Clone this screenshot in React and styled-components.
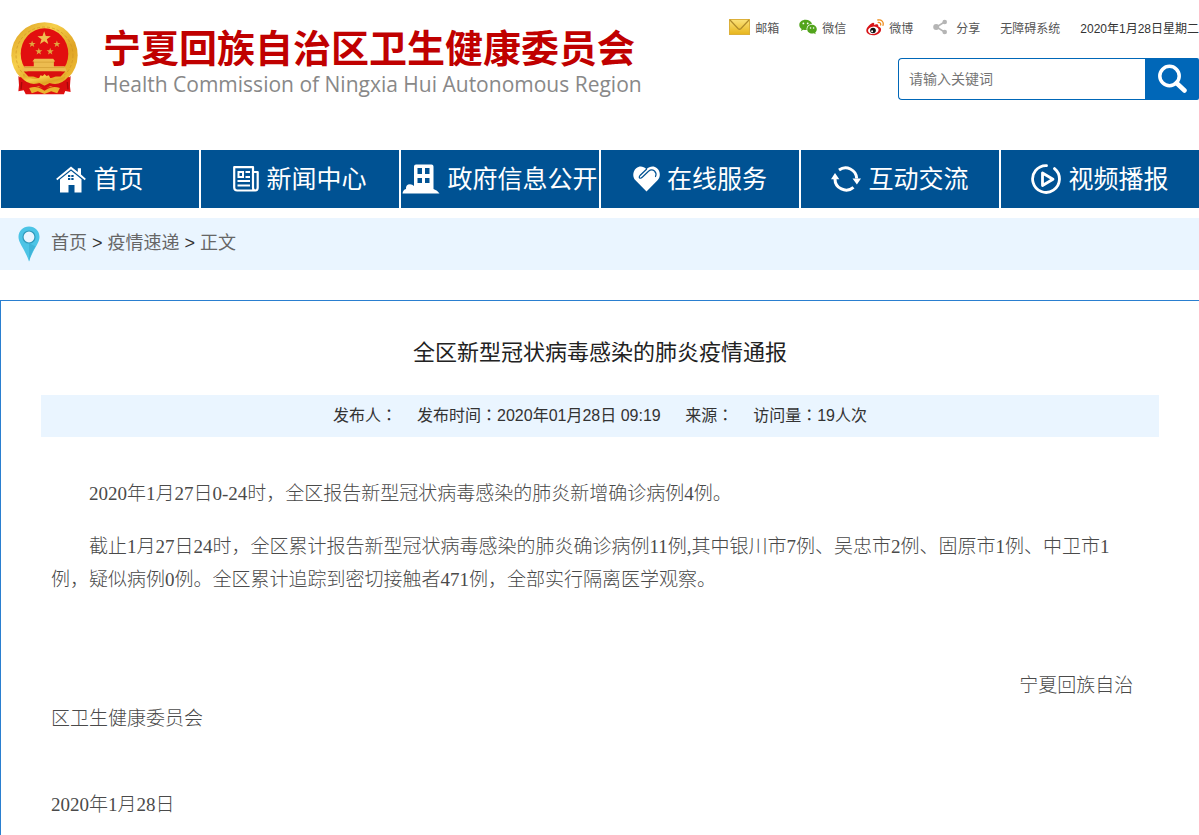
import React from 'react';
import styled, { createGlobalStyle } from 'styled-components';

const GlobalStyle = createGlobalStyle`
    * {
        box-sizing: border-box;
    }
    body {
        margin: 0;
        background: #fff;
        color: #333;
        font-family: 'Liberation Sans', 'Noto Sans CJK SC', sans-serif;
        font-size: 16px;
    }
    h1, h2, p {
        margin: 0;
        font-weight: normal;
    }
    a {
        color: inherit;
        text-decoration: none;
    }
    svg {
        display: block;
        flex: none;
    }
`;

const Header = styled.header`
    display: flex;
    justify-content: space-between;
    min-height: 150px;
`;

const Brand = styled.a`
    display: flex;
    align-items: flex-start;
    gap: 25px;
    padding: 22px 0 0 11px;
`;

const BrandText = styled.div`
    display: flex;
    flex-direction: column;
    gap: 4px;
    padding-top: 4px;
    white-space: nowrap;
`;

const SiteName = styled.h1`
    && {
        font-weight: bold;
    }
    font-family: 'Noto Sans CJK SC', sans-serif;
    font-size: 38px;
    line-height: 40px;
    color: #c00000;
`;

const SiteNameEn = styled.p`
    font-family: 'Open Sans', sans-serif;
    font-size: 21px;
    line-height: 28px;
    color: #888;
`;

const HeaderSide = styled.div`
    display: flex;
    flex-direction: column;
    align-items: flex-end;
    gap: 18px;
    padding-top: 14px;
`;

const TopBar = styled.div`
    display: flex;
    align-items: center;
    gap: 20px;
    height: 26px;
    font-size: 12px;
    white-space: nowrap;
`;

const TopLink = styled.a`
    display: flex;
    align-items: center;
    gap: 5px;
    color: #555;
`;

const SearchForm = styled.form`
    display: flex;
    width: 301px;
    height: 42px;
`;

const SearchInput = styled.input`
    flex: 1;
    min-width: 0;
    padding: 0 10px;
    border: 1px solid #0067b8;
    border-right: 0;
    border-radius: 4px 0 0 4px;
    font-family: inherit;
    font-size: 14px;
    outline: none;
    &::placeholder {
        color: #757575;
        opacity: 1;
    }
`;

const SearchButton = styled.button`
    display: flex;
    align-items: center;
    justify-content: center;
    width: 54px;
    padding: 0;
    border: 0;
    border-radius: 0 2px 2px 0;
    background: #0067b8;
    cursor: pointer;
`;

const Nav = styled.nav`
    display: grid;
    grid-template-columns: repeat(6, 1fr);
    gap: 2px;
    padding-left: 1px;
`;

const NavLink = styled.a`
    display: flex;
    align-items: center;
    justify-content: center;
    gap: 7px;
    height: 58px;
    background: #005293;
    color: #fff;
    font-size: 25px;
    white-space: nowrap;
    &:hover {
        background: #0067b8;
    }
`;

const NavLabel = styled.span`
    padding-bottom: 4px;
`;

const Crumbs = styled.nav`
    display: flex;
    align-items: center;
    gap: 11px;
    height: 52px;
    margin-top: 10px;
    padding-left: 18px;
    background: #eaf5ff;
    font-size: 18px;
    line-height: 50px;
    a, span {
        color: #666;
    }
`;

const CrumbText = styled.div`
    align-self: flex-start;
`;

const Article = styled.main`
    margin-top: 30px;
    padding: 36px 40px 14px;
    border: solid #2a7fd0;
    border-width: 1px 0 0 1px;
`;

const Title = styled.h2`
    font-size: 22px;
    line-height: 32px;
    text-align: center;
    color: #222;
`;

const Meta = styled.div`
    display: flex;
    justify-content: center;
    gap: 20px;
    margin-top: 26px;
    background: #eaf5ff;
    line-height: 42px;
`;

// the TC face centres the full-width colon in its box
const Colon = styled.span`
    font-family: 'Noto Sans CJK TC', sans-serif;
    line-height: 1;
`;

const Content = styled.div`
    display: flex;
    flex-direction: column;
    gap: 20px;
    padding: 40px 20px 0 10px;
    font-family: 'Liberation Serif', 'Noto Sans CJK SC', serif;
    font-size: 19px;
    line-height: 33px;
    color: #4a4a4a;
    p {
        font-weight: 300;
    }
`;

const Paragraph = styled.p`
    text-indent: 2em;
`;

const Signature = styled.p`
    margin-top: 53px;
    text-indent: 89%;
`;

const IssueDate = styled.p`
    margin-top: 33px;
`;

const star = (cx, cy, r) =>
    Array.from({ length: 10 }, (_, i) => {
        const a = (Math.PI / 5) * i - Math.PI / 2;
        const d = i % 2 ? r * 0.4 : r;
        return `${(cx + d * Math.cos(a)).toFixed(1)},${(cy + d * Math.sin(a)).toFixed(1)}`;
    }).join(' ');

const Emblem = () => (
    <svg width="67" height="73" viewBox="0 0 200 216" aria-hidden="true">
        <defs>
            <linearGradient id="gold" x1="0" y1="0" x2="1" y2="1">
                <stop offset="0" stopColor="#d99a1c" />
                <stop offset="0.35" stopColor="#f6cf4a" />
                <stop offset="0.65" stopColor="#e0a424" />
                <stop offset="1" stopColor="#f3c63c" />
            </linearGradient>
        </defs>
        <path d="M27 156 L22 206 L38 203 L44 215 L158 215 L162 205 L178 208 L172 156 Z" fill="#e01010" />
        <ellipse cx="100" cy="98" rx="99" ry="98" fill="url(#gold)" />
        <path d="M22 160 Q50 192 100 196 Q150 192 178 160 L176 190 L152 208 L48 208 L24 190 Z" fill="#d80f0f" />
        <ellipse cx="100" cy="98" rx="85" ry="84" fill="none" stroke="#cf9324" strokeWidth="2" strokeDasharray="9 6" />
        <ellipse cx="100" cy="94" rx="71" ry="76" fill="#e20f0f" />
        <polygon points={star(99, 48, 21)} fill="#f0c050" />
        <polygon points={star(63, 65, 11)} fill="#e0a840" />
        <polygon points={star(137, 65, 11)} fill="#e0a840" />
        <polygon points={star(83, 87, 11)} fill="#e0a840" />
        <polygon points={star(117, 87, 11)} fill="#e0a840" />
        <path d="M70 109 H126 L132 117 H128 V131 H160 L167 147 H33 L40 131 H68 V117 H64 Z" fill="#ecbc50" />
        <path d="M68 119 H128 M40 135 H160" stroke="#cf9a30" strokeWidth="2" />
        <path d="M38 147 H162 L148 162 H52 Z" fill="#d90f0f" />
        <path d="M36 156 Q68 176 84 166 L88 158 L95 160 L100 154 L106 160 L113 158 L117 166 Q134 176 164 156 L158 176 L132 184 L118 180 L100 188 L82 180 L66 184 L40 176 Z" fill="url(#gold)" />
        <path d="M26 166 Q52 196 84 186 L100 194 L116 186 Q148 196 174 166" fill="none" stroke="#d80f0f" strokeWidth="9" />
        <path d="M54 196 Q76 190 90 198 L100 204 L110 198 Q126 190 146 196 L138 212 L120 206 L100 214 L80 206 L62 212 Z" fill="#eab22f" />
        <path d="M32 178 L30 200 M168 178 L170 200" stroke="#a80909" strokeWidth="4" />
    </svg>
);

const MailIcon = () => (
    <svg width="21" height="16" viewBox="0 0 21 16" aria-hidden="true">
        <defs>
            <linearGradient id="mail" x1="0" y1="0" x2="0" y2="1">
                <stop offset="0" stopColor="#fbe27a" />
                <stop offset="1" stopColor="#e7b51c" />
            </linearGradient>
        </defs>
        <rect x="0.5" y="0.5" width="20" height="15" fill="url(#mail)" stroke="#dcb03a" />
        <path d="M1 1 L9 9.500 Q10.500 11 12 9.500 L20 1" fill="none" stroke="#b08c2c" strokeWidth="1.200" />
    </svg>
);

const WechatIcon = () => (
    <svg width="18" height="16" viewBox="0 0 18 16" aria-hidden="true">
        <path d="M6.600 0.800 C3 0.800 0.300 3 0.300 5.900 C0.300 7.500 1.200 8.900 2.600 9.900 L2 12 L4.300 10.700 C5.500 11 6.500 11.100 7.700 10.900 C7 7.800 9.500 5 13 5 C12.500 2.600 9.900 0.800 6.600 0.800 Z" fill="#52a41c" />
        <path d="M17.800 10.200 C17.800 7.700 15.600 5.800 12.900 5.800 C10.200 5.800 8.200 7.800 8.200 10.200 C8.200 12.600 10.300 14.500 13 14.500 C13.700 14.500 14.300 14.400 14.900 14.200 L16.700 15.200 L16.200 13.500 C17.200 12.700 17.800 11.500 17.800 10.200 Z" fill="#52a41c" />
        <g fill="#fff">
            <circle cx="4.400" cy="4.400" r="0.900" />
            <circle cx="8.700" cy="4.400" r="0.900" />
            <circle cx="11.500" cy="9" r="0.800" />
            <circle cx="14.600" cy="9" r="0.800" />
        </g>
    </svg>
);

const WeiboIcon = () => (
    <svg width="18" height="17" viewBox="0 0 18 17" aria-hidden="true">
        <path d="M6.500 4 C7.900 3.500 8.600 4.300 8.100 5.900 C10.500 4.900 12.700 5.100 12.300 7.400 C14.500 8 15.600 9.600 14.900 11.700 C14 14.500 10.600 16.300 7 16.200 C3.200 16.100 0.300 14.300 0.300 11.500 C0.300 8.900 3.600 5 6.500 4 Z" fill="#d81418" />
        <ellipse cx="7.300" cy="11.300" rx="5.300" ry="3.700" fill="#fff" transform="rotate(-8 7.300 11.300)" />
        <circle cx="7" cy="11.500" r="2.800" fill="#111" />
        <circle cx="6.100" cy="12.200" r="1" fill="#fff" />
        <path d="M11.800 1 C15.500 0.300 18 3 17 6.400 M12.200 3.500 C14.100 3.200 15 4.500 14.600 6" fill="none" stroke="#ee8d1c" strokeWidth="1.300" strokeLinecap="round" />
    </svg>
);

const ShareIcon = () => (
    <svg width="18" height="16" viewBox="0 0 18 16" aria-hidden="true">
        <path d="M11.500 3 L3.500 8 L11.500 13" fill="none" stroke="#b5b5b5" strokeWidth="1.500" />
        <g fill="#b5b5b5">
            <circle cx="3.200" cy="8" r="3" />
            <circle cx="11.700" cy="3" r="2.300" />
            <circle cx="11.700" cy="13" r="2.300" />
        </g>
    </svg>
);

const SearchIcon = () => (
    <svg width="30" height="30" viewBox="0 0 30 30" fill="none" stroke="#fff" aria-hidden="true">
        <circle cx="12.500" cy="12" r="9.700" strokeWidth="3.500" />
        <path d="M19.500 19 L27.500 26.500" strokeWidth="4.500" strokeLinecap="round" />
    </svg>
);

const HomeIcon = () => (
    <svg width="30" height="27" viewBox="0 0 30 27" fill="#fff" aria-hidden="true">
        <path d="M15 0.500 L21.800 6 V2.200 H25 V8.600 L29.800 12.800 L28.800 14.200 L15 3.200 L1.200 14.200 L0.200 12.800 Z" />
        <path d="M15 4.800 L25.500 13.200 V26.500 H18.500 V19 H12.500 V26.500 H4 V13.600 Z" />
        <path d="M12 9 H14.300 V11 H12 Z M15.300 9 H17.600 V11 H15.300 Z M12 12 H14.300 V14 H12 Z M15.300 12 H17.600 V14 H15.300 Z" fill="#005293" />
    </svg>
);

const NewsIcon = () => (
    <svg width="26" height="26" viewBox="0 0 26 26" fill="none" stroke="#fff" aria-hidden="true">
        <path d="M1.200 1.200 H20 V21.500 Q20 24.500 22.300 24.500 H4.200 Q1.200 24.500 1.200 21.500 Z M20 6 H24.700 V21.500 Q24.700 24.500 22.300 24.500" strokeWidth="2.200" strokeLinejoin="round" />
        <rect x="5.500" y="6" width="4.500" height="5" strokeWidth="2" />
        <path d="M12.500 6 H17 M12.500 11 H17 M4.500 15 H17 M4.500 19.500 H17" strokeWidth="2" />
    </svg>
);

const BuildingIcon = () => (
    <svg width="38" height="30" viewBox="0 0 38 30" aria-hidden="true">
        <path d="M12 28 V2.500 Q12 0.500 14 0.500 H29.500 Q31.500 0.500 31.500 2.500 V25 Q35.500 26 37.500 29.500 H0.500 Q1 25.500 4 25 Q3.600 20.500 8 20.300 Q10.500 20.300 12 22 Z" fill="#fff" />
        <path d="M15.500 4 H20 V10 H15.500 Z M23 4 H27.500 V10 H23 Z M15.500 14 H20 V19 H15.500 Z M23 14 H27.500 V19 H23 Z" fill="#005293" />
    </svg>
);

const HeartIcon = () => (
    <svg width="27" height="26" viewBox="0 0 27 26" aria-hidden="true">
        <path d="M13.500 25.500 L2.200 14 C-0.800 10.500 -0.200 5 3.200 2.200 C6.500 -0.300 10.500 0.200 13.500 3.200 C16.500 0.200 21 -0.300 24 2.200 C27.400 5 27.800 10.500 24.800 14 Z" fill="#fff" />
        <path d="M13.500 3.200 L7 9.500 Q5.500 11.500 7 12.200 Q8 12.500 9.500 11 L15.500 5.300 Q18.500 2.800 21.500 5 Q24 7.500 22.500 10.500" fill="none" stroke="#005293" strokeWidth="1.200" strokeLinecap="round" />
    </svg>
);

const CycleIcon = () => (
    <svg width="30" height="26" viewBox="0 0 30 26" aria-hidden="true">
        <path d="M8 4 A11.200 11.200 0 0 1 25.700 12.500 M22.500 21.300 A11.200 11.200 0 0 1 4 12.500" fill="none" stroke="#fff" strokeWidth="3" />
        <path d="M21.500 12.500 H30 L25.900 18.500 Z M0 13.200 H8.300 L4 7 Z" fill="#fff" />
    </svg>
);

const PlayIcon = () => (
    <svg width="30" height="30" viewBox="0 0 30 30" fill="none" stroke="#fff" strokeLinecap="round" strokeLinejoin="round" aria-hidden="true">
        <path d="M15.500 1.600 A13.400 13.400 0 1 0 23.500 4.600" strokeWidth="2.800" />
        <path d="M11.500 9 V21.500 L22 15.200 Z" strokeWidth="2.800" />
    </svg>
);

const PinIcon = () => (
    <svg width="22" height="36" viewBox="0 0 22 36" aria-hidden="true">
        <path d="M11 0.500 C5 0.500 0.500 5 0.500 11 C0.500 17.500 7 23 11 35.500 C15 23 21.500 17.500 21.500 11 C21.500 5 17 0.500 11 0.500 Z" fill="#4cc4e6" />
        <path d="M11 17 L17.500 20.500 C15 24 12.500 29 11 35.500 Z" fill="#3fb4d8" />
        <circle cx="11" cy="11" r="6" fill="#eaf5ff" stroke="#3099bb" strokeWidth="1.200" />
    </svg>
);

const topLinks = [
    { label: '邮箱', Icon: MailIcon },
    { label: '微信', Icon: WechatIcon },
    { label: '微博', Icon: WeiboIcon },
    { label: '分享', Icon: ShareIcon },
];

const navItems = [
    { label: '首页', Icon: HomeIcon },
    { label: '新闻中心', Icon: NewsIcon },
    { label: '政府信息公开', Icon: BuildingIcon },
    { label: '在线服务', Icon: HeartIcon },
    { label: '互动交流', Icon: CycleIcon },
    { label: '视频播报', Icon: PlayIcon },
];

const App = () => (
    <>
        <GlobalStyle />
        <Header>
            <Brand href="#">
                <Emblem />
                <BrandText>
                    <SiteName>宁夏回族自治区卫生健康委员会</SiteName>
                    <SiteNameEn>Health Commission of Ningxia Hui Autonomous Region</SiteNameEn>
                </BrandText>
            </Brand>
            <HeaderSide>
                <TopBar>
                    {topLinks.map(({ label, Icon }) => (
                        <TopLink href="#" key={label}><Icon />{label}</TopLink>
                    ))}
                    <TopLink href="#">无障碍系统</TopLink>
                    <span>2020年1月28日星期二</span>
                </TopBar>
                <SearchForm onSubmit={(e) => e.preventDefault()}>
                    <SearchInput type="text" aria-label="请输入关键词" placeholder="请输入关键词" />
                    <SearchButton type="submit" aria-label="搜索"><SearchIcon /></SearchButton>
                </SearchForm>
            </HeaderSide>
        </Header>
        <Nav>
            {navItems.map(({ label, Icon }) => (
                <NavLink href="#" key={label}><Icon /><NavLabel>{label}</NavLabel></NavLink>
            ))}
        </Nav>
        <Crumbs>
            <PinIcon />
            <CrumbText>
                <a href="#">首页</a> &gt; <a href="#">疫情速递</a> &gt; <span>正文</span>
            </CrumbText>
        </Crumbs>
        <Article>
            <Title>全区新型冠状病毒感染的肺炎疫情通报</Title>
            <Meta>
                <span>发布人<Colon>：</Colon></span>
                <span>发布时间<Colon>：</Colon>2020年01月28日 09:19&nbsp;</span>
                <span>来源<Colon>：</Colon></span>
                <span>访问量<Colon>：</Colon>19人次</span>
            </Meta>
            <Content>
                <Paragraph>2020年1月27日0-24时，全区报告新型冠状病毒感染的肺炎新增确诊病例4例。</Paragraph>
                <Paragraph>截止1月27日24时，全区累计报告新型冠状病毒感染的肺炎确诊病例11例,其中银川市7例、吴忠市2例、固原市1例、中卫市1例，疑似病例0例。全区累计追踪到密切接触者471例，全部实行隔离医学观察。</Paragraph>
                <Signature>宁夏回族自治区卫生健康委员会</Signature>
                <IssueDate>2020年1月28日</IssueDate>
            </Content>
        </Article>
    </>
);

export default App;
